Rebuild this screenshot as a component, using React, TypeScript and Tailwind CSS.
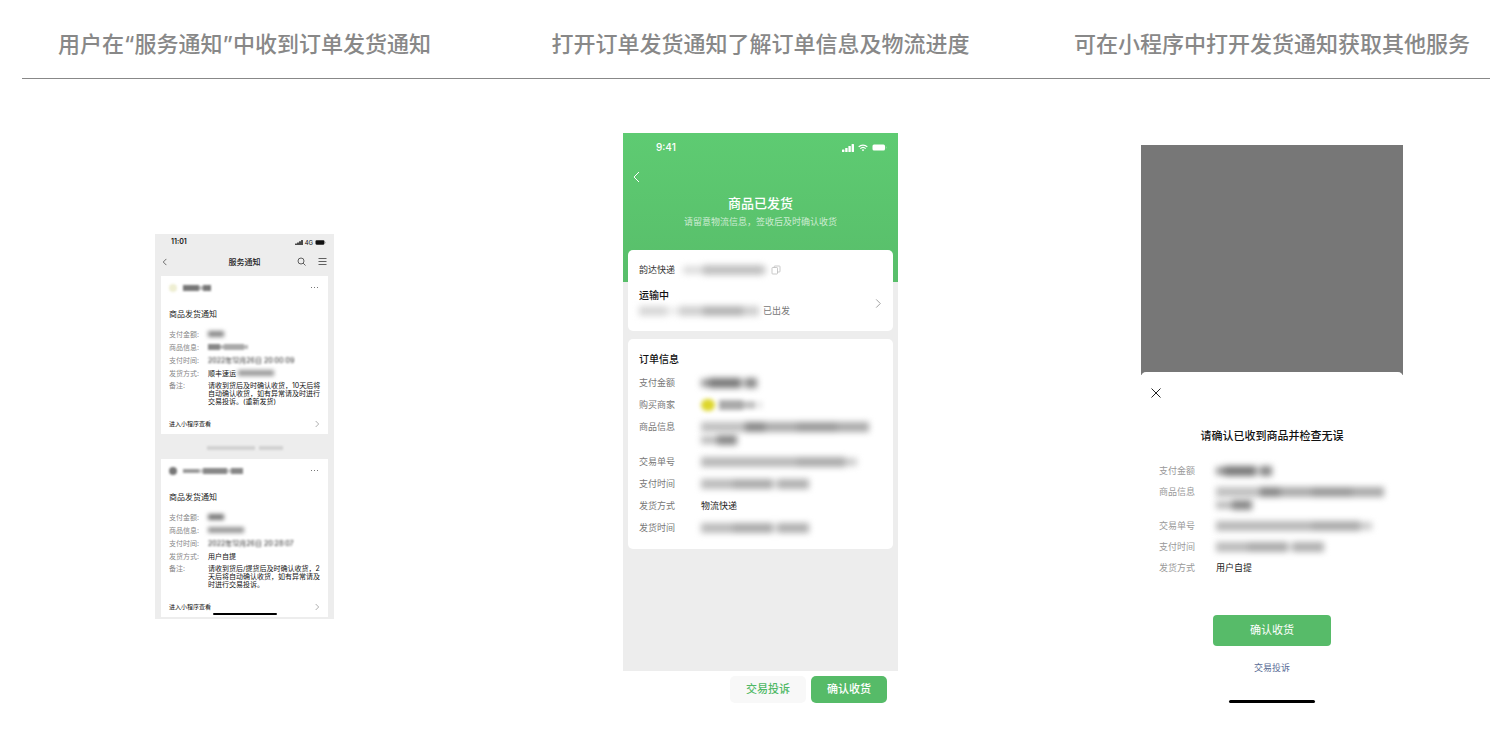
import React from 'react'
import { clsx } from 'clsx'

type Row = { label: string; value: React.ReactNode }

// One masked value, built from soft grey strokes
const Mask: React.FC<{ parts: string[]; className?: string }> = ({ parts, className }) => (
  <span aria-hidden="true" className={clsx('flex items-center', className)}>
    {parts.map((part, i) => (
      <span key={i} className={clsx('block', part)} />
    ))}
  </span>
)

const BackIcon: React.FC<{ className?: string }> = ({ className }) => (
  <svg viewBox="0 0 8 12" fill="none" stroke="currentColor" className={className}>
    <path d="M7 1 2 6l5 5" />
  </svg>
)

const ChevronIcon: React.FC<{ className?: string }> = ({ className }) => (
  <svg viewBox="0 0 8 12" fill="none" stroke="currentColor" className={className}>
    <path d="m2 1.500 4.500 4.500L2 10.500" />
  </svg>
)

const SignalIcon: React.FC<{ className?: string }> = ({ className }) => (
  <svg viewBox="0 0 12 8" fill="currentColor" className={className}>
    <rect x="0" y="5.500" width="2.400" height="2.500" rx=".5" />
    <rect x="3.200" y="4" width="2.400" height="4" rx=".5" />
    <rect x="6.400" y="2" width="2.400" height="6" rx=".5" />
    <rect x="9.600" y="0" width="2.400" height="8" rx=".5" />
  </svg>
)

const WifiIcon: React.FC<{ className?: string }> = ({ className }) => (
  <svg viewBox="0 0 12 9" fill="none" stroke="currentColor" strokeWidth="1.500" className={className}>
    <path d="M.8 3.200a7.500 7.500 0 0 1 10.400 0" />
    <path d="M2.800 5.300a4.600 4.600 0 0 1 6.400 0" />
    <path d="M4.500 6.800a2.200 2.200 0 0 1 3 0L6 8.500z" fill="currentColor" stroke="none" />
  </svg>
)

const BatteryIcon: React.FC<{ className?: string }> = ({ className }) => (
  <svg viewBox="0 0 15 7" fill="currentColor" className={className}>
    <rect x="0.500" y="0.500" width="12.500" height="6" rx="1.500" />
    <path d="M13.800 2.300c.9.300.9 2.100 0 2.400z" opacity=".5" />
  </svg>
)

const CopyIcon: React.FC<{ className?: string }> = ({ className }) => (
  <svg viewBox="0 0 10 10" fill="none" stroke="currentColor" strokeWidth=".8" className={className}>
    <rect x="1" y="2.500" width="5.500" height="6.500" rx=".7" />
    <path d="M3.200 2.500V1.700q0-.7.7-.7h4.400q.7 0 .7.7v4.600q0 .7-.7.7H6.500" />
  </svg>
)

const notices = [
  {
    avatar: 'bg-[#eeeed2]',
    name: ['w-4 h-1.5 bg-[#777777]', 'w-1 h-1 bg-[#bbbbbb]', 'w-2 h-1.5 bg-[#777777]'],
    rows: [
      { label: '支付金额:', value: <Mask className="blur-[2px]" parts={['w-4 h-1.5 bg-[#888888]']} /> },
      { label: '商品信息:', value: <Mask className="blur-[1px]" parts={['w-3 h-1.5 bg-[#888888]', 'w-1 h-1 bg-[#bbbbbb]', 'w-5 h-1.5 bg-[#aaaaaa]', 'w-1 h-1 bg-[#bbbbbb]']} /> },
      { label: '支付时间:', value: <span className="text-[#222222] blur-[1px]">2022年12月26日 20:00:09</span> },
      {
        label: '发货方式:',
        value: (
          <>
            顺丰速运
            <Mask className="ml-0.5 blur-[2px]" parts={['w-9 h-1.5 bg-[#999999]']} />
          </>
        ),
      },
    ],
    note: '请收到货后及时确认收货，10天后将自动确认收货，如有异常请及时进行交易投诉。(重新发货)',
  },
  {
    avatar: 'bg-[#777777]',
    name: ['w-4 h-1 bg-[#999999]', 'w-1 h-1 bg-[#cccccc]', 'w-6 h-1.5 bg-[#888888]', 'w-1 h-1 bg-[#cccccc]', 'w-3 h-1.5 bg-[#888888]'],
    rows: [
      { label: '支付金额:', value: <Mask className="blur-[2px]" parts={['w-4 h-1.5 bg-[#777777]']} /> },
      { label: '商品信息:', value: <Mask className="blur-[2px]" parts={['w-9 h-1.5 bg-[#999999]']} /> },
      { label: '支付时间:', value: <span className="text-[#222222] blur-[1px]">2022年12月26日 20:28:07</span> },
      { label: '发货方式:', value: '用户自提' },
    ],
    note: '请收到货后/提货后及时确认收货，2天后将自动确认收货，如有异常请及时进行交易投诉。',
  },
]

const NoticeCard: React.FC<{ notice: (typeof notices)[number] }> = ({ notice }) => (
  <article className="bg-white px-2">
    <header className="flex h-6 items-center">
      <span className={clsx('mr-1 size-2 rounded-full blur-[1px]', notice.avatar)} />
      <Mask className="ml-0.5 blur-[1px]" parts={notice.name} />
      <button type="button" aria-label="更多" className="ml-auto flex gap-0.5 pr-0.5">
        <span className="size-px bg-[#777777]" />
        <span className="size-px bg-[#777777]" />
        <span className="size-px bg-[#777777]" />
      </button>
    </header>
    <h3 className="mt-2 text-[8px] leading-[12px] text-[#222222]">商品发货通知</h3>
    <dl className="mt-2 text-[7px]">
      {notice.rows.map((row) => (
        <div key={row.label} className="flex leading-[13px]">
          <dt className="w-[39px] shrink-0 text-[#888888]">{row.label}</dt>
          <dd className="flex items-center whitespace-nowrap text-[#111111]">{row.value}</dd>
        </div>
      ))}
      <div className="flex pt-0.5 leading-[8px]">
        <dt className="w-[39px] shrink-0 text-[#888888]">备注:</dt>
        <dd className="-mr-1 flex-1 text-[#111111]">{notice.note}</dd>
      </div>
    </dl>
    <button type="button" className="mt-2 flex h-5 w-full items-center justify-between text-[6px] text-[#111111]">
      进入小程序查看
      <ChevronIcon className="h-2 w-1.5 text-[#888888]" />
    </button>
  </article>
)

const NoticePhone: React.FC = () => (
  <section className="flex w-[179px] flex-col bg-[#ededed] pb-0.5">
    <div className="flex h-[18px] items-center pr-2 pl-4 text-[#111111]">
      <span className="text-[7px] font-semibold">11:01</span>
      <SignalIcon className="ml-auto h-[5px] w-2" />
      <span className="mx-0.5 text-[6px]">4G</span>
      <BatteryIcon className="h-[5px] w-[11px]" />
    </div>
    <div className="grid h-5 grid-cols-3 items-center px-[7px] text-[#222222]">
      <button type="button" aria-label="返回">
        <BackIcon className="h-2 w-[5px]" />
      </button>
      <h2 className="text-center text-[8px] font-medium">服务通知</h2>
      <div className="flex items-center justify-end gap-3">
        <button type="button" aria-label="搜索">
          <svg viewBox="0 0 9 9" fill="none" stroke="currentColor" strokeWidth=".7" className="size-[9px]">
            <circle cx="4" cy="4" r="3" />
            <path d="m6.200 6.200 2.300 2.300" />
          </svg>
        </button>
        <button type="button" aria-label="菜单">
          <svg viewBox="0 0 9 9" fill="none" stroke="currentColor" strokeWidth=".7" className="size-[9px]">
            <path d="M.5 1.500h8M.5 4.500h8M.5 7.500h8" />
          </svg>
        </button>
      </div>
    </div>
    <div className="px-1.5 pt-1">
      <NoticeCard notice={notices[0]} />
      <div className="flex h-[25px] items-center justify-center pt-1">
        <Mask className="gap-1 blur-[1px]" parts={['w-12 h-1 bg-[#d2d2d2]', 'w-6 h-1 bg-[#d2d2d2]']} />
      </div>
      <div className="relative">
        <NoticeCard notice={notices[1]} />
        <div className="absolute bottom-0.5 left-[52px] h-0.5 w-16 rounded-full bg-black" />
      </div>
    </div>
  </section>
)

const amountMask = (
  <Mask
    className="h-[13px] blur-[3px]"
    parts={['w-2 h-2 bg-[#999999]', 'w-8 h-2.5 bg-[#777777]', 'w-1 h-2 bg-[#dddddd]', 'w-3 h-2.5 bg-[#888888]']}
  />
)

const productMask = (
  <>
    <Mask
      className="h-[13px] blur-[3px]"
      parts={['w-11 h-2.5 bg-[#c0c0c0]', 'w-5 h-2.5 bg-[#888888]', 'w-8 h-2.5 bg-[#aaaaaa]', 'w-10 h-2.5 bg-[#999999]', 'w-8 h-2.5 bg-[#aaaaaa]']}
    />
    <Mask className="h-[13px] blur-[3px]" parts={['w-4 h-2 bg-[#bbbbbb]', 'w-5 h-2.5 bg-[#888888]']} />
  </>
)

const orderNoMask = (
  <Mask className="h-[13px] blur-[3px]" parts={['w-24 h-2.5 bg-[#b8b8b8]', 'w-12 h-2.5 bg-[#aaaaaa]', 'w-3 h-2 bg-[#cccccc]']} />
)

const timeMask = (
  <Mask
    className="h-[13px] blur-[3px]"
    parts={['w-8 h-2.5 bg-[#bbbbbb]', 'w-10 h-2.5 bg-[#aaaaaa]', 'w-1 h-2 bg-[#eeeeee]', 'w-8 h-2.5 bg-[#b0b0b0]']}
  />
)

const orderRows: Row[] = [
  { label: '支付金额', value: amountMask },
  {
    label: '购买商家',
    value: (
      <Mask
        className="h-[13px] blur-[2px]"
        parts={['w-3.5 h-3 rounded-full bg-[#ddd62c]', 'w-1 h-2 bg-white', 'w-6 h-2.5 bg-[#aaaaaa]', 'w-3 h-2 bg-[#c4c4c4]', 'w-2 h-2 bg-[#eeeeee]']}
      />
    ),
  },
  { label: '商品信息', value: productMask },
  { label: '交易单号', value: orderNoMask },
  { label: '支付时间', value: timeMask },
  { label: '发货方式', value: '物流快递' },
  { label: '发货时间', value: timeMask },
]

const confirmRows: Row[] = [
  { label: '支付金额', value: amountMask },
  { label: '商品信息', value: productMask },
  { label: '交易单号', value: orderNoMask },
  { label: '支付时间', value: timeMask },
  { label: '发货方式', value: '用户自提' },
]

const OrderPhone: React.FC = () => (
  <section className="w-[275px]">
    <div className="flex h-[538px] flex-col bg-[linear-gradient(#5ecb72_0px,#58be6a_149px,#ededed_149px)] px-[5px]">
      <div className="flex h-[29px] items-center pr-1.5 pl-7 text-white">
        <span className="text-[10px] font-medium">9:41</span>
        <SignalIcon className="ml-auto h-2 w-3" />
        <WifiIcon className="mx-1 h-2 w-2.5" />
        <BatteryIcon className="h-[7px] w-[15px]" />
      </div>
      <div className="flex h-[30px] items-center pl-1 text-white">
        <button type="button" aria-label="返回">
          <BackIcon className="h-3 w-2" />
        </button>
      </div>
      <div className="text-center text-white">
        <h2 className="text-[13px] leading-[22px] font-medium">商品已发货</h2>
        <p className="text-[9px] leading-[16px] text-white/70">请留意物流信息，签收后及时确认收货</p>
      </div>

      <div className="mt-5 rounded-[5px] bg-white px-[11px] py-3">
        <div className="flex h-4 items-center text-[9px] text-[#333333]">
          韵达快递
          <Mask className="ml-2 blur-[3px]" parts={['w-5 h-2 bg-[#dddddd]', 'w-15 h-2.5 bg-[#c0c0c0]', 'w-1 h-2 bg-[#dddddd]']} />
          <button type="button" aria-label="复制" className="ml-1 text-[#bbbbbb]">
            <CopyIcon className="size-2.5" />
          </button>
        </div>
        <div className="mt-[9px] flex items-center justify-between">
          <div>
            <h3 className="text-[10px] leading-[16px] font-medium text-[#111111]">运输中</h3>
            <p className="flex h-4 items-center text-[9px] text-[#777777]">
              <Mask
                className="mr-1 blur-[3px]"
                parts={['w-7 h-2.5 bg-[#d8d8d8]', 'w-3 h-2 bg-[#eeeeee]', 'w-6 h-2.5 bg-[#d0d0d0]', 'w-10 h-2.5 bg-[#b4b4b4]', 'w-4 h-2.5 bg-[#d0d0d0]']}
              />
              已出发
            </p>
          </div>
          <ChevronIcon className="h-[11px] w-2 text-[#999999]" />
        </div>
      </div>

      <div className="mt-2 rounded-[5px] bg-white px-[11px] pt-3 pb-[15px]">
        <h3 className="text-[10px] leading-[16px] font-medium text-[#111111]">订单信息</h3>
        <dl className="mt-[9px] flex flex-col gap-[9px] text-[9px] leading-[13px]">
          {orderRows.map((row) => (
            <div key={row.label} className="flex">
              <dt className="w-[62px] shrink-0 text-[#777777]">{row.label}</dt>
              <dd className="text-[#222222]">{row.value}</dd>
            </div>
          ))}
        </dl>
      </div>
    </div>
    <div className="flex h-12 items-start justify-end gap-[5px] pt-[5px] pr-[11px] text-[11px] font-medium">
      <button type="button" className="h-[27px] w-[76px] rounded-[5px] bg-[#f8f8f8] text-[#50b866]">
        交易投诉
      </button>
      <button type="button" className="h-[27px] w-[76px] rounded-[5px] bg-[#56bb68] text-white">
        确认收货
      </button>
    </div>
  </section>
)

const ConfirmPhone: React.FC = () => (
  <section className="w-[262px] bg-[linear-gradient(#777777_230px,#ffffff_230px)] pt-[227px]">
    <div className="flex flex-col items-center rounded-t-[5px] bg-white pt-3.5 pb-1">
      <button type="button" aria-label="关闭" className="ml-2 flex size-3.5 items-center justify-center self-start text-[#222222]">
        <svg viewBox="0 0 10 10" fill="none" stroke="currentColor" strokeWidth="1" className="size-2.5">
          <path d="m.5.5 9 9M9.500.5l-9 9" />
        </svg>
      </button>
      <h2 className="mt-7 text-[11px] leading-[16px] font-medium text-[#111111]">请确认已收到商品并检查无误</h2>
      <dl className="mt-5 flex w-full flex-col gap-2 pl-[18px] text-[9px] leading-[13px]">
        {confirmRows.map((row) => (
          <div key={row.label} className="flex">
            <dt className="w-[57px] shrink-0 text-[#999999]">{row.label}</dt>
            <dd className="text-[#222222]">{row.value}</dd>
          </div>
        ))}
      </dl>
      <button type="button" className="mt-[41px] h-[31px] w-[118px] rounded-[4px] bg-[#57bb69] text-[11px] text-white">
        确认收货
      </button>
      <a href="#complaint" className="mt-3.5 text-[9px] leading-[16px] text-[#576b95]">
        交易投诉
      </a>
      <div className="mt-6 h-[3px] w-[86px] rounded-full bg-black" />
    </div>
  </section>
)

const steps = [
  { title: '用户在“服务通知”中收到订单发货通知', screen: <NoticePhone /> },
  { title: '打开订单发货通知了解订单信息及物流进度', screen: <OrderPhone /> },
  { title: '可在小程序中打开发货通知获取其他服务', screen: <ConfirmPhone /> },
]

export default function App() {
  return (
    <main lang="zh-CN" className="min-h-screen bg-white pr-[18px] pl-[22px] font-['Inter','Noto_Sans_CJK_SC',sans-serif]">
      <div className="grid h-[79px] grid-cols-[445fr_587fr_436fr] items-center border-b border-[#888888] pt-2.5">
        {steps.map((step) => (
          <h1 key={step.title} className="text-center text-[22px] leading-[32px] font-medium whitespace-nowrap text-[#888888]">
            {step.title}
          </h1>
        ))}
      </div>
      <div className="grid grid-cols-[445fr_587fr_436fr] items-center justify-items-center pt-[54px]">
        {steps.map((step) => (
          <React.Fragment key={step.title}>{step.screen}</React.Fragment>
        ))}
      </div>
    </main>
  )
}
